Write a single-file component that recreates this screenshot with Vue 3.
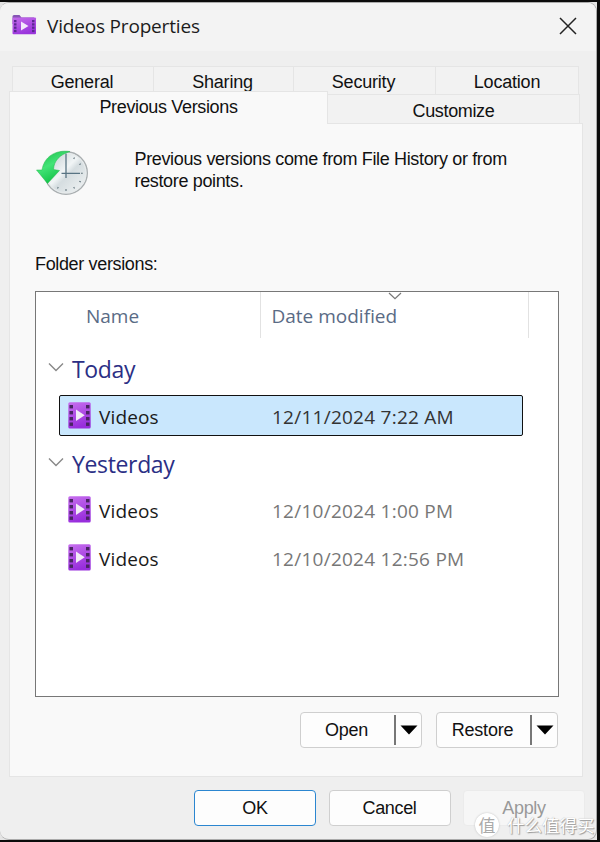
<script setup>
import { ref } from 'vue'

const backTabs = ['General', 'Sharing', 'Security', 'Location']

const groups = [
  { label: 'Today', items: [{ id: 1, name: 'Videos', date: '12/11/2024 7:22 AM' }] },
  {
    label: 'Yesterday',
    items: [
      { id: 2, name: 'Videos', date: '12/10/2024 1:00 PM' },
      { id: 3, name: 'Videos', date: '12/10/2024 12:56 PM' },
    ],
  },
]

const selected = ref(1)
</script>

<template>
  <div class="screen">
    <div class="window">
      <header class="titlebar">
        <svg class="title-icon" width="26" height="22" viewBox="0 0 26 22">
          <defs>
            <linearGradient id="folder" x1="0" y1="0" x2="0.4" y2="1">
              <stop offset="0" stop-color="#c46cea" />
              <stop offset="1" stop-color="#9a35dc" />
            </linearGradient>
          </defs>
          <path d="M.5 2.500Q.5 1 2 1H7.500L9.500 3.500H22V10H.5Z" fill="#8755b5" />
          <rect x=".5" y="3.500" width="23.500" height="16.700" rx="1" fill="url(#folder)" />
          <g fill="#5b2791">
            <rect v-for="y in [6, 9.3, 12.6, 15.9]" :key="y" x="2" :y="y" width="2.500" height="2.200" />
            <rect v-for="y in [6, 9.3, 12.6, 15.9]" :key="'r' + y" x="20" :y="y" width="2.500" height="2.200" />
          </g>
          <path d="M9 7.500L16.500 12L9 16.500Z" fill="#f3e9fb" />
        </svg>
        <span class="title">Videos Properties</span>
        <svg class="close" width="18" height="18" viewBox="0 0 18 18">
          <path d="M1 1L17 17M17 1L1 17" stroke="#222" stroke-width="1.500" fill="none" />
        </svg>
      </header>

      <div class="tabs">
        <div class="tabs-back">
          <div v-for="tab in backTabs" :key="tab" class="tab">{{ tab }}</div>
        </div>
        <div class="tabs-front">
          <div class="tab active">Previous Versions</div>
          <div class="tab customize">Customize</div>
        </div>
      </div>

      <section class="page">
        <div class="intro">
          <svg width="54" height="48" viewBox="0 0 54 48">
            <defs>
              <linearGradient id="face" x1="0" y1="0" x2="1" y2="1">
                <stop offset="0" stop-color="#b9c5ca" />
                <stop offset="0.450" stop-color="#f1f5f6" />
                <stop offset="0.550" stop-color="#d5dde0" />
                <stop offset="1" stop-color="#f5f7f7" />
              </linearGradient>
              <linearGradient id="arrow" x1="0" y1="0" x2="0.500" y2="1">
                <stop offset="0" stop-color="#17b845" />
                <stop offset="0.500" stop-color="#43e477" />
                <stop offset="1" stop-color="#0fc044" />
              </linearGradient>
            </defs>
            <circle cx="30" cy="24" r="21.300" fill="url(#face)" stroke="#a9aeb0" stroke-width="1.400" />
            <circle cx="30" cy="24" r="19.900" fill="none" stroke="#e6eaeb" stroke-width="1.200" />
            <path
              d="M38.500 8.500L37.700 10M44.800 14.700L43.300 15.600M46.800 24.300H45M44.800 33L43.300 32.200M38.500 39.500L37.700 38M30 42V40M21.500 39.500L22.300 38"
              stroke="#61737b" stroke-width="1.100"
            />
            <path d="M30 4.500V29M25.500 24.300H44" stroke="#587483" stroke-width="1.300" fill="none" />
            <path d="M34 2.500C19 .5 8 8 6 21L.5 21L11.500 34.500L23.500 21.500L17.500 20.500C18 12 23 6 34 2.500Z" fill="url(#arrow)" stroke="#1fb849" stroke-width=".5" />
          </svg>
          <p>Previous versions come from File History or from<br />restore points.</p>
        </div>

        <div class="list-label">Folder versions:</div>

        <div class="list">
          <div class="list-head">
            <div class="col col-name">Name</div>
            <div class="col col-date">
              Date modified
              <svg class="sort" width="14" height="8" viewBox="0 0 14 8">
                <path d="M1 1L7 6.700L13 1" stroke="#777" stroke-width="1.200" fill="none" />
              </svg>
            </div>
          </div>

          <div v-for="group in groups" :key="group.label" class="group">
            <div class="group-head">
              <svg width="16" height="10" viewBox="0 0 16 10">
                <path d="M1 1.500L8 8.500L15 1.500" stroke="#888" stroke-width="1.400" fill="none" />
              </svg>
              <span>{{ group.label }}</span>
            </div>
            <div
              v-for="item in group.items"
              :key="item.id"
              class="row"
              :class="{ selected: item.id === selected }"
              @click="selected = item.id"
            >
              <svg class="row-icon" width="23" height="27" viewBox="0 0 23 27">
                <defs>
                  <linearGradient :id="'film' + item.id" x1="0" y1="0" x2="0.300" y2="1">
                    <stop offset="0" stop-color="#c770ee" />
                    <stop offset="1" stop-color="#982edc" />
                  </linearGradient>
                </defs>
                <rect x=".3" y=".3" width="22.400" height="26.200" rx="1.500" :fill="`url(#film${item.id})`" />
                <g fill="#492563">
                  <rect v-for="y in [3, 9, 15, 20.5]" :key="y" x="1.500" :y="y" width="3.500" height="3.400" />
                  <rect v-for="y in [3, 9, 15, 20.5]" :key="'r' + y" x="18" :y="y" width="3.500" height="3.400" />
                </g>
                <path d="M8 7.500L16.700 13.300L8 19Z" fill="#f2ebf7" />
              </svg>
              <span class="row-name">{{ item.name }}</span>
              <span class="row-date">{{ item.date }}</span>
            </div>
          </div>
        </div>

        <div class="list-actions">
          <button v-for="label in ['Open', 'Restore']" :key="label" class="btn split" type="button">
            <span class="split-label">{{ label }}</span>
            <span class="split-arrow">
              <svg width="18" height="10" viewBox="0 0 18 10"><path d="M.5.5H17.500L9 9.500Z" fill="#000" /></svg>
            </span>
          </button>
        </div>
      </section>

      <footer class="footer">
        <button class="btn btn-default" type="button">OK</button>
        <button class="btn" type="button">Cancel</button>
        <button class="btn btn-disabled" type="button">Apply</button>
      </footer>
    </div>

    <div class="watermark">
      <span class="mark">值</span>
      <span class="mark-text">什么值得买</span>
    </div>
  </div>
</template>

<style>
body {
  background: #0b0b0b;
  overflow: hidden;
}
</style>

<style scoped>
.screen {
  position: relative;
  box-sizing: border-box;
  width: 600px;
  height: 842px;
  border: solid #0b0b0b;
  border-width: 2px 3px 2px 0;
  background: #e4e4e4;
  font-family: "Liberation Sans", Arial, sans-serif;
  font-size: 18px;
  letter-spacing: -0.35px;
  color: #111;
}

.window {
  box-sizing: border-box;
  height: 838px;
  border: 1px solid #aaa;
  border-left: 0;
  border-radius: 9px;
  background: #efefef;
  overflow: hidden;
}

.titlebar {
  display: flex;
  align-items: center;
  box-sizing: border-box;
  height: 48px;
  padding: 0 19px 2px 12px;
  background: #f3f3f3;
  font-family: "Open Sans", sans-serif;
  font-size: 19px;
  letter-spacing: -0.18px;
  color: #1c1c1c;
}

.title-icon {
  margin-top: -2px;
}

.title {
  margin-left: 9px;
}

.close {
  margin-left: auto;
}

.tabs {
  margin: 15px 14px 0 9px;
}

.tabs-back {
  display: grid;
  grid-template-columns: 141px 140px 142px 144px;
  margin-left: 3px;
  letter-spacing: -0.2px;
}

.tab {
  box-sizing: border-box;
  height: 28px;
  border: 1px solid #e5e5e5;
  border-width: 1px 0 0 1px;
  background: #f2f2f2;
  line-height: 30px;
  text-align: center;
}

.tabs-back .tab {
  padding-right: 2px;
}

.tabs-back .tab:last-child {
  padding-right: 0;
  border-right-width: 1px;
}

.tabs-front {
  display: flex;
  align-items: flex-end;
  margin-top: -3px;
}

.tab.active {
  position: relative;
  width: 319px;
  height: 33px;
  margin-bottom: -1px;
  border-right-width: 1px;
  background: #f9f9f9;
  line-height: 31px;
}

.customize {
  width: 252px;
  height: 29px;
  border-left: 0;
  border-right-width: 1px;
  line-height: 32px;
}

.page {
  box-sizing: border-box;
  height: 654px;
  margin: 0 13px 0 9px;
  padding: 25px 24px 0 25px;
  border: 1px solid #e5e5e5;
  background: #f9f9f9;
}

.intro {
  display: flex;
  height: 104px;
  padding-left: 1px;
}

.intro p {
  margin: -1px 0 0 44.5px;
  line-height: 22px;
}

.list-label {
  height: 38px;
  line-height: 22px;
}

.list {
  box-sizing: border-box;
  width: 524px;
  height: 406px;
  border: 1px solid #777;
  background: #fff;
  font-family: "Open Sans", sans-serif;
  font-size: 19px;
  letter-spacing: 0;
}

.list-head {
  display: flex;
  height: 46px;
  color: #5a6b85;
}

.col {
  position: relative;
  box-sizing: border-box;
  border-right: 1px solid #e2e2e2;
  line-height: 48px;
}

.col-name {
  width: 225px;
  padding-left: 50px;
}

.col-date {
  width: 268px;
  padding-left: 10.5px;
}

.sort {
  position: absolute;
  top: 0;
  left: 127px;
}

.group-head {
  display: flex;
  align-items: center;
  gap: 8px;
  padding-left: 12px;
  font-size: 23px;
  letter-spacing: -0.35px;
  color: #2b2f85;
}

.group-head svg {
  margin-top: -5px;
}

.group:nth-child(2) {
  padding-top: 9px;
}

.group:nth-child(2) .group-head {
  height: 48px;
  padding-bottom: 0;
  align-items: flex-start;
  line-height: 44px;
}

.group:nth-child(2) .group-head svg {
  margin-top: 15px;
}

.group:nth-child(3) {
  padding-top: 6px;
}

.group:nth-child(3) .group-head {
  height: 44px;
}

.row {
  display: flex;
  align-items: center;
  box-sizing: border-box;
  width: 464px;
  height: 41px;
  margin: 0 0 7px 23px;
  padding-left: 8px;
  border: 1px solid transparent;
  border-radius: 2px;
  color: #1a1a1a;
}

.group:nth-child(3) .group-head + .row {
  margin-top: 3px;
}

.row-icon {
  margin-top: 0;
}

.row-name {
  width: 173px;
  margin: 3px 0 0 8px;
  letter-spacing: 0.15px;
}

.row-date {
  margin-top: 3px;
  letter-spacing: 0.25px;
  color: #777;
}

.row.selected {
  margin-bottom: 0;
  border-color: #111;
  background: #c9e7fd;
}

.row.selected .row-date {
  color: #333;
}

.list-actions {
  display: flex;
  justify-content: flex-end;
  gap: 14px;
  margin-top: 15px;
}

.btn {
  box-sizing: border-box;
  width: 122px;
  height: 36px;
  padding: 0;
  border: 1px solid #cfcfcf;
  border-radius: 4px;
  background: #fdfdfd;
  font: inherit;
  letter-spacing: inherit;
  color: #111;
}

.split {
  display: flex;
  align-items: center;
}

.split-label {
  flex: 1;
  margin-left: -2px;
  letter-spacing: -0.2px;
}

.split-arrow {
  display: flex;
  align-items: center;
  justify-content: center;
  width: 25px;
  height: 30px;
  border-left: 2px solid #777;
}

.footer {
  display: flex;
  justify-content: flex-end;
  gap: 12.5px;
  margin: 13px 11px 0 0;
}

.btn-default {
  border-color: #2b86d0;
}

.btn-disabled {
  border-color: #ebebeb;
  background: #f6f6f6;
  color: #999;
}

.watermark {
  position: absolute;
  left: 475px;
  top: 810px;
  display: flex;
  align-items: center;
  gap: 8px;
  width: 125px;
  font-family: "Noto Sans CJK SC", sans-serif;
  letter-spacing: 0;
  white-space: nowrap;
}

.mark {
  width: 24px;
  height: 24px;
  border-radius: 50%;
  background: #fff;
  box-shadow: 0 0 2px #bbb;
  font-size: 17px;
  line-height: 23px;
  text-align: center;
  color: #aaa;
}

.mark-text {
  font-size: 17.5px;
  line-height: 26px;
  color: #fff;
  text-shadow: 1px 1px 1px #999, 0 0 1px #aaa;
}
</style>
